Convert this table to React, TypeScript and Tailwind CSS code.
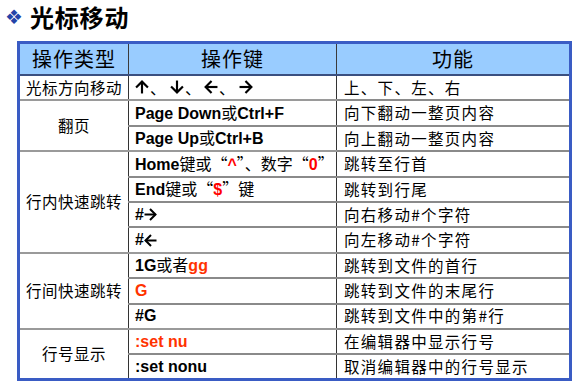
const cjk = "font-['Noto_Sans_CJK_SC','Noto_Sans',sans-serif]";
const latin = "font-['Liberation_Sans','Noto_Sans_CJK_SC',sans-serif]";

type Row = {
  group?: { label: string; span: number };
  key: React.ReactNode;
  desc: string;
  last?: boolean;
};

// chevron-headed arrow, drawn pointing right then rotated
function Arrow({ dir, size = 13 }: { dir: "up" | "down" | "left" | "right"; size?: number }) {
  const rot = { right: 0, down: 90, left: 180, up: 270 }[dir];
  return (
    <svg width={size} height={size} viewBox="0 0 13 13" className="inline-block align-[-1px]">
      <g transform={`rotate(${rot} 6.5 6.5)`} fill="none" stroke="#000" strokeWidth="2" strokeLinecap="butt" strokeLinejoin="miter">
        <path d="M0.5 6.5H11.5" />
        <path d="M6 1L11.5 6.5L6 12" />
      </g>
    </svg>
  );
}

const R = ({ children }: { children: React.ReactNode }) => <span className="text-[#ff0000]">{children}</span>;
const O = ({ children }: { children: React.ReactNode }) => <span className="text-[#ff3300]">{children}</span>;
const Z = ({ children }: { children: React.ReactNode }) => (
  <span className={`${cjk} font-normal`}>{children}</span>
);

const rows: Row[] = [
  {
    group: { label: "光标方向移动", span: 1 },
    key: (
      <span className="inline-flex items-center gap-[1px]">
        <Arrow dir="up" size={14} />
        <Z>、</Z>
        <span className="w-[2px]" />
        <Arrow dir="down" size={14} />
        <Z>、</Z>
        <span className="w-[1px]" />
        <Arrow dir="left" size={14} />
        <Z>、</Z>
        <span className="w-[2px]" />
        <Arrow dir="right" size={14} />
      </span>
    ),
    desc: "上、下、左、右",
    last: true,
  },
  { group: { label: "翻页", span: 2 }, key: <>Page Down<Z>或</Z>Ctrl+F</>, desc: "向下翻动一整页内容" },
  { key: <>Page Up<Z>或</Z>Ctrl+B</>, desc: "向上翻动一整页内容", last: true },
  { group: { label: "行内快速跳转", span: 4 }, key: <>Home<Z>键或“</Z><R>^</R><Z>”、数字“</Z><R>0</R><Z>”</Z></>, desc: "跳转至行首" },
  { key: <>End<Z>键或“</Z><R>$</R><Z>”键</Z></>, desc: "跳转到行尾" },
  { key: <span className="inline-flex items-center">#<Arrow dir="right" /></span>, desc: "向右移动#个字符" },
  { key: <span className="inline-flex items-center">#<Arrow dir="left" /></span>, desc: "向左移动#个字符", last: true },
  { group: { label: "行间快速跳转", span: 3 }, key: <>1G<Z>或者</Z><O>gg</O></>, desc: "跳转到文件的首行" },
  { key: <O>G</O>, desc: "跳转到文件的末尾行" },
  { key: <>#G</>, desc: "跳转到文件中的第#行", last: true },
  { group: { label: "行号显示", span: 2 }, key: <O>:set nu</O>, desc: "在编辑器中显示行号" },
  { key: <>:set nonu</>, desc: "取消编辑器中的行号显示", last: true },
];

export default function App() {
  return (
    <div className="w-[576px] h-[381px] bg-white relative overflow-hidden">
      {/* Title */}
      <div className="flex items-center h-[32px] pl-[5px] pt-[1px]">
        <span className="text-[#2443a8] text-[20px] leading-none font-['DejaVu_Sans',sans-serif] w-[24px]">❖</span>
        <h1 className={`${cjk} font-bold text-[24px] leading-none tracking-[0.8px] text-black ml-[1px]`}>光标移动</h1>
      </div>

      {/* Table */}
      <table className="absolute left-[17px] top-[41px] border-collapse border-[3px] border-[#3a5cc4] table-fixed w-[555px]">
        <colgroup>
          <col className="w-[110px]" />
          <col className="w-[208px]" />
          <col />
        </colgroup>
        <thead>
          <tr className="h-[31px] bg-[#99ccff]">
            <th className={`${cjk} font-normal text-[20px] tracking-[1px] text-black border-r border-b-2 border-r-[#3a3a3a] border-b-[#3a4f80] p-0`}>操作类型</th>
            <th className={`${cjk} font-normal text-[20px] tracking-[1px] text-black border-r border-b-2 border-r-[#3a3a3a] border-b-[#3a4f80] p-0`}>操作键</th>
            <th className={`${cjk} font-normal text-[20px] tracking-[1px] text-black border-b-2 border-b-[#3a4f80] p-0`}>功能</th>
          </tr>
        </thead>
        <tbody>
          {rows.map((r, i) => (
            <tr key={i} className="h-[25.4px]">
              {r.group && (
                <td
                  rowSpan={r.group.span}
                  className={`${cjk} text-[15.5px] text-center text-black border-r border-r-[#333] ${i >= rows.length - 2 ? "" : "border-b-2 border-b-[#9a9a9a]"} p-0 tracking-[0.5px]`}
                >
                  {r.group.label}
                </td>
              )}
              <td
                className={`${latin} font-bold text-[16px] text-black border-r border-r-[#333] ${i === rows.length - 1 ? "" : r.last ? "border-b-2 border-b-[#9a9a9a]" : "border-b-2 border-b-[#8a8a8a]"} pl-[6px] p-0 whitespace-nowrap leading-none`}
              >
                {r.key}
              </td>
              <td
                className={`${cjk} text-[15.5px] tracking-[1.3px] text-black ${i === rows.length - 1 ? "" : "border-b-2 border-b-[#8a8a8a]"} pl-[7px] p-0 whitespace-nowrap leading-none`}
              >
                {r.desc}
              </td>
            </tr>
          ))}
        </tbody>
      </table>
    </div>
  );
}
